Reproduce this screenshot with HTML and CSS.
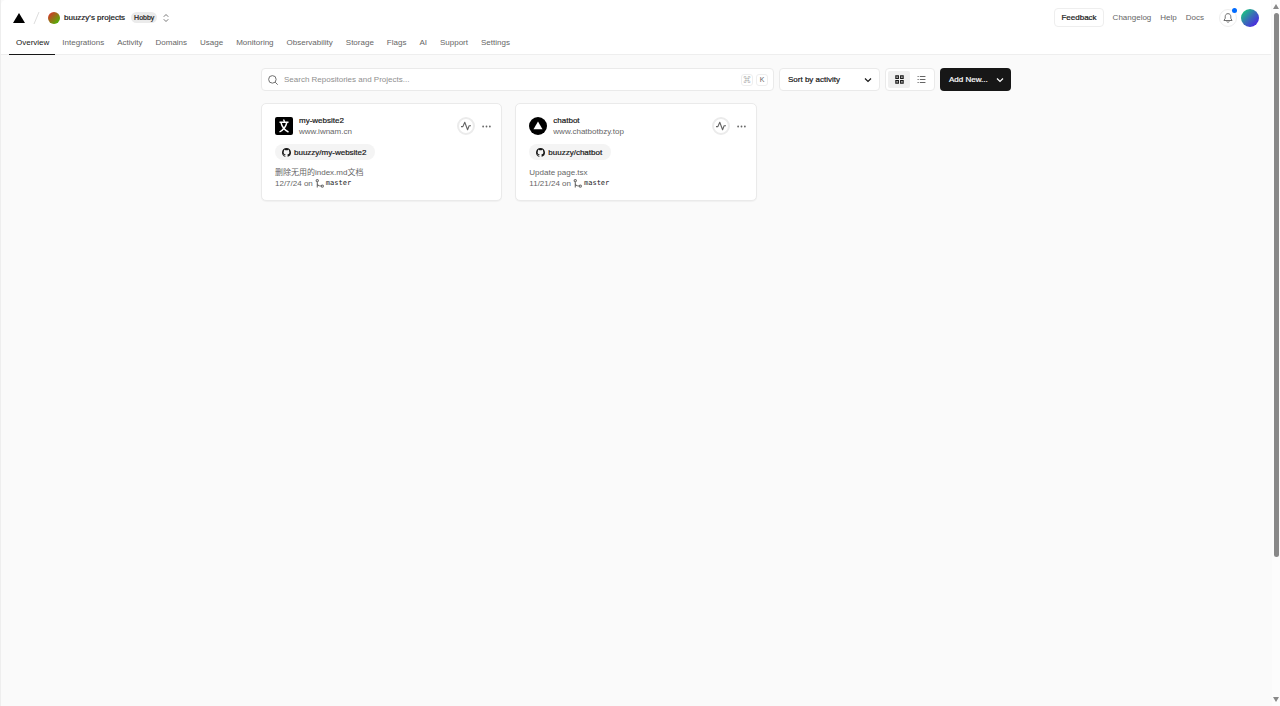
FILE: index.html
```html
<!DOCTYPE html>
<html lang="en">
<head>
    <meta charset="UTF-8">
    <meta name="viewport" content="width=device-width, initial-scale=1.0">
    <title>buuzzy's projects - Overview</title>
    <link rel="stylesheet" href="styles.css">
</head>
<body>
    <!-- shared icons -->
    <svg class="sprite" aria-hidden="true">
        <symbol id="github" viewBox="0 0 16 16"><path fill="currentColor" d="M8 0C3.58 0 0 3.58 0 8c0 3.54 2.29 6.53 5.47 7.59.4.07.55-.17.55-.38 0-.19-.01-.82-.01-1.49-2.01.37-2.53-.49-2.69-.94-.09-.23-.48-.94-.82-1.13-.28-.15-.68-.52-.01-.53.63-.01 1.08.58 1.23.82.72 1.21 1.87.87 2.33.66.07-.52.28-.87.51-1.07-1.78-.2-3.64-.89-3.64-3.95 0-.87.31-1.59.82-2.15-.08-.2-.36-1.02.08-2.12 0 0 .67-.21 2.2.82.64-.18 1.32-.27 2-.27s1.36.09 2 .27c1.53-1.04 2.2-.82 2.2-.82.44 1.1.16 1.92.08 2.12.51.56.82 1.27.82 2.15 0 3.07-1.87 3.75-3.65 3.95.29.25.54.73.54 1.48 0 1.07-.01 1.93-.01 2.2 0 .21.15.46.55.38A8.01 8.01 0 0 0 16 8c0-4.42-3.58-8-8-8z"/></symbol>
        <symbol id="chevron" viewBox="0 0 16 16"><path fill="none" stroke="currentColor" stroke-width="2.4" d="M2 5l6 6 6-6"/></symbol>
        <symbol id="activity" viewBox="0 0 16 16"><path fill="none" stroke="currentColor" stroke-width="1.8" stroke-linejoin="round" d="M0 9h3L6 2l4.500 12L13 7.500h3"/></symbol>
        <symbol id="branch" viewBox="0 0 16 16"><g fill="none" stroke="currentColor" stroke-width="1.800"><circle cx="4" cy="3" r="2"/><circle cx="13" cy="12.500" r="2"/><path d="M4 5v10M4 7c0 4 3 5.500 7 5.500"/></g></symbol>
        <symbol id="dots" viewBox="0 0 16 16"><g fill="currentColor"><circle cx="2" cy="8" r="1.600"/><circle cx="8" cy="8" r="1.600"/><circle cx="14" cy="8" r="1.600"/></g></symbol>
    </svg>

    <div class="page">
        <header class="header">
            <div class="topbar">
                <a class="logo" href="#" aria-label="Home">
                    <svg width="12" height="10" viewBox="0 0 12 10"><path d="M6 0l6 10H0z"/></svg>
                </a>
                <svg class="slash" width="7" height="12" viewBox="0 0 7 12"><path fill="none" stroke="#ddd" d="M6 0L1 12"/></svg>
                <a class="team" href="#">
                    <span class="team-avatar"></span>
                    <span class="medium">buuzzy's projects</span>
                    <span class="plan medium">Hobby</span>
                </a>
                <button class="icon-button switcher" aria-label="Switch team">
                    <svg width="8" height="8" viewBox="0 0 16 16"><path fill="none" stroke="currentColor" stroke-width="1.800" d="M3.500 5.500L8 1l4.500 4.500M3.500 10.500L8 15l4.500-4.500"/></svg>
                </button>
                <div class="links">
                    <button class="feedback medium">Feedback</button>
                    <a href="#">Changelog</a>
                    <a href="#">Help</a>
                    <a href="#">Docs</a>
                </div>
                <button class="bell" aria-label="Notifications">
                    <svg width="10" height="10" viewBox="0 0 16 16"><path fill="none" stroke="currentColor" stroke-width="1.500" d="M8 1C5 1 3.500 3.200 3.500 6v2.500L1.500 12h13l-2-3.500V6C12.500 3.200 11 1 8 1zM6 13.500c.5 1.700 3.500 1.700 4 0"/></svg>
                    <span class="badge"></span>
                </button>
                <button class="avatar" aria-label="Account"></button>
            </div>
            <nav class="tabs">
                <a class="active" href="#">Overview</a>
                <a href="#">Integrations</a>
                <a href="#">Activity</a>
                <a href="#">Domains</a>
                <a href="#">Usage</a>
                <a href="#">Monitoring</a>
                <a href="#">Observability</a>
                <a href="#">Storage</a>
                <a href="#">Flags</a>
                <a href="#">AI</a>
                <a href="#">Support</a>
                <a href="#">Settings</a>
            </nav>
        </header>

        <main class="content">
            <div class="toolbar">
                <label class="search">
                    <svg width="10" height="10" viewBox="0 0 16 16"><path fill="none" stroke="currentColor" stroke-width="1.500" d="M11.500 11.500L15.500 15.500M13 7A6 6 0 1 1 1 7a6 6 0 0 1 12 0z"/></svg>
                    <input type="text" placeholder="Search Repositories and Projects..." aria-label="Search Repositories and Projects">
                    <kbd>⌘</kbd>
                    <kbd>K</kbd>
                </label>
                <div class="sort">
                    <select class="medium" aria-label="Sort projects">
                        <option>Sort by activity</option>
                        <option>Sort by name</option>
                    </select>
                    <svg width="8" height="8"><use href="#chevron"/></svg>
                </div>
                <div class="view">
                    <button class="selected" aria-label="Grid view">
                        <svg width="9" height="9" viewBox="0 0 16 16"><path fill="none" stroke="currentColor" stroke-width="2" d="M1.500 1.500h4.500v4.500H1.500zM10 1.500h4.500v4.500H10zM1.500 10h4.500v4.500H1.500zM10 10h4.500v4.500H10z"/></svg>
                    </button>
                    <button aria-label="List view">
                        <svg width="9" height="9" viewBox="0 0 16 16"><path fill="none" stroke="currentColor" stroke-width="1.800" d="M1 2.500h2M5 2.500h10M1 8h2M5 8h10M1 13.500h2M5 13.500h10"/></svg>
                    </button>
                </div>
                <button class="add medium">Add New... <svg width="8" height="8"><use href="#chevron"/></svg></button>
            </div>

            <div class="projects">
                <article class="card">
                    <div class="card-head">
                        <svg width="18" height="18" viewBox="0 0 18 18"><rect width="18" height="18" rx="2"/><path fill="none" stroke="#fff" stroke-width="1.400" d="M8.500 2.500l1 2M4.500 5.200h9M11.800 5.500C11 9.500 8.500 12.800 4.500 15M6 5.500c.8 4 3.500 7.500 7.500 9.500"/></svg>
                        <div class="project-title">
                            <a class="name medium" href="#">my-website2</a>
                            <a href="#">www.iwnam.cn</a>
                        </div>
                        <button class="status" aria-label="Activity"><svg width="10" height="10"><use href="#activity"/></svg></button>
                        <button class="icon-button" aria-label="More"><svg width="9" height="9"><use href="#dots"/></svg></button>
                    </div>
                    <a class="repo medium" href="#"><svg width="9" height="9"><use href="#github"/></svg>buuzzy/my-website2</a>
                    <p class="commit">删除无用的index.md文档</p>
                    <p class="date">12/7/24 on <svg width="9" height="9"><use href="#branch"/></svg><code>master</code></p>
                </article>

                <article class="card">
                    <div class="card-head">
                        <svg width="18" height="18" viewBox="0 0 18 18"><circle cx="9" cy="9" r="9"/><path fill="#fff" d="M9 4.500l4.500 7.700h-9z"/></svg>
                        <div class="project-title">
                            <a class="name medium" href="#">chatbot</a>
                            <a href="#">www.chatbotbzy.top</a>
                        </div>
                        <button class="status" aria-label="Activity"><svg width="10" height="10"><use href="#activity"/></svg></button>
                        <button class="icon-button" aria-label="More"><svg width="9" height="9"><use href="#dots"/></svg></button>
                    </div>
                    <a class="repo medium" href="#"><svg width="9" height="9"><use href="#github"/></svg>buuzzy/chatbot</a>
                    <p class="commit">Update page.tsx</p>
                    <p class="date">11/21/24 on <svg width="9" height="9"><use href="#branch"/></svg><code>master</code></p>
                </article>
            </div>
        </main>
    </div>

    <div class="scrollbar" aria-hidden="true">
        <svg width="6" height="5" viewBox="0 0 6 5"><path d="M3 0l3 5H0z"/></svg>
        <div class="track"><div class="thumb"></div></div>
        <svg width="6" height="5" viewBox="0 0 6 5"><path d="M0 0h6L3 5z"/></svg>
    </div>
</body>
</html>
```
FILE: styles.css
```css
* {
    box-sizing: border-box;
}
body {
    margin: 0;
    display: flex;
    min-height: 100vh;
    font-family: "Liberation Sans", Arial, "Noto Sans CJK SC", sans-serif;
    font-size: 8px;
    line-height: 11px;
    color: #666;
    background-color: #fafafa;
}
a {
    color: inherit;
    text-decoration: none;
}
p {
    margin: 0;
}
svg {
    display: block;
    flex-shrink: 0;
}
button, input, select {
    font: inherit;
    color: inherit;
    padding: 0;
    border: none;
    background: none;
}
button {
    cursor: pointer;
}
.sprite {
    position: absolute;
    width: 0;
    height: 0;
}
.medium {
    -webkit-text-stroke: 0.2px;
}
.page {
    flex: 1;
    min-width: 0;
    border-left: 1px solid #eee;
    border-right: 1px solid #fafafa;
}

/* header */
.header {
    padding: 0 12px 0 8px;
    background-color: #fff;
    border-bottom: 1px solid #eee;
    border-top-left-radius: 5px;
}
.topbar {
    display: flex;
    align-items: center;
    height: 35px;
    padding-left: 4px;
}
.logo {
    fill: #000;
}
.slash {
    margin: 0 8px;
}
.team {
    display: flex;
    align-items: center;
    gap: 4px;
    color: #171717;
}
.team-avatar {
    width: 12px;
    height: 12px;
    border-radius: 50%;
    background: linear-gradient(135deg, #e8252c, #38c800);
}
.plan {
    margin-left: 2px;
    padding: 0 3px;
    border-radius: 6px;
    font-size: 7px;
    background-color: #ebebeb;
}
.icon-button {
    color: #666;
}
.switcher {
    margin-left: 5px;
}
.links {
    display: flex;
    align-items: center;
    gap: 9px;
    margin-left: auto;
}
.feedback {
    height: 19px;
    padding: 0 6px;
    border: 1px solid #eee;
    border-radius: 4px;
    color: #171717;
}
.bell {
    position: relative;
    display: flex;
    align-items: center;
    justify-content: center;
    width: 18px;
    height: 18px;
    margin: 0 4px 0 15px;
    border: 1px solid #eee;
    border-radius: 50%;
}
.badge {
    position: absolute;
    top: -2px;
    right: -1px;
    width: 5px;
    height: 5px;
    border-radius: 50%;
    background-color: #006bff;
}
.avatar {
    width: 18px;
    height: 18px;
    border-radius: 50%;
    background: linear-gradient(135deg, #10e070, #3a6cb8 50%, #5010f0);
}
.tabs {
    display: flex;
    margin-bottom: -1px;
}
.tabs a {
    height: 20px;
    padding: 2px 6px 0 7px;
}
.tabs .active {
    color: #171717;
    border-bottom: 1px solid #171717;
}

/* toolbar */
.content {
    max-width: 750px;
    margin: 0 auto;
    padding-top: 13px;
}
.toolbar {
    display: flex;
    gap: 5px;
    height: 23px;
}
.search, .sort, .view {
    display: flex;
    align-items: center;
    border: 1px solid #eaeaea;
    border-radius: 4px;
    background-color: #fff;
}
.search {
    flex: 1;
    gap: 3px;
    padding: 0 5px 0 6px;
}
.search input {
    flex: 1;
    min-width: 0;
    margin-left: 3px;
    outline: none;
}
.search input::placeholder {
    color: #8f8f8f;
}
kbd {
    width: 12px;
    height: 12px;
    border: 1px solid #eee;
    border-radius: 3px;
    font-family: inherit;
    font-size: 7px;
    line-height: 10px;
    text-align: center;
}
.sort {
    position: relative;
    width: 101px;
    color: #171717;
}
.sort select {
    width: 100%;
    height: 100%;
    padding-left: 8px;
    appearance: none;
}
.sort svg {
    position: absolute;
    right: 7px;
    pointer-events: none;
}
.view {
    padding: 2px;
}
.view button {
    display: flex;
    align-items: center;
    justify-content: center;
    width: 22px;
    height: 17px;
    border-radius: 2px;
}
.view .selected {
    color: #171717;
    background-color: #f0f0f0;
}
.add {
    display: flex;
    align-items: center;
    justify-content: space-between;
    width: 71px;
    padding: 0 7px 0 9px;
    border-radius: 4px;
    color: #fff;
    background-color: #171717;
}

/* projects */
.projects {
    display: grid;
    grid-template-columns: repeat(3, 1fr);
    gap: 13px;
    margin-top: 12px;
}
.card {
    height: 98px;
    padding: 11px 10px 0 13px;
    border: 1px solid #eaeaea;
    border-radius: 5px;
    background-color: #fff;
    box-shadow: 0 1px 1px rgba(0, 0, 0, 0.04);
}
.card-head {
    display: flex;
    align-items: center;
}
.project-title {
    display: flex;
    flex-direction: column;
    flex: 1;
    margin-left: 6px;
}
.name {
    color: #171717;
}
.status {
    display: flex;
    align-items: center;
    justify-content: center;
    width: 18px;
    height: 18px;
    margin-right: 7px;
    border: 2px solid #ebebeb;
    border-radius: 50%;
}
.repo {
    display: inline-flex;
    align-items: center;
    gap: 3px;
    height: 16px;
    margin: 7px 0;
    padding: 0 9px 0 7px;
    border-radius: 8px;
    color: #171717;
    background-color: #f4f4f4;
}
.date {
    display: flex;
    align-items: center;
    gap: 2px;
}
.date code {
    font-family: "DejaVu Sans Mono", monospace;
    font-size: 7px;
    color: #171717;
}

/* scrollbar */
.scrollbar {
    display: flex;
    flex-direction: column;
    align-items: center;
    gap: 4px;
    width: 8px;
    height: 100vh;
    padding: 4px 0;
    background-color: #fcfcfc;
    fill: #888;
}
.track {
    flex: 1;
}
.thumb {
    width: 5px;
    height: 80%;
    border-radius: 3px;
    background-color: #888;
}
```
